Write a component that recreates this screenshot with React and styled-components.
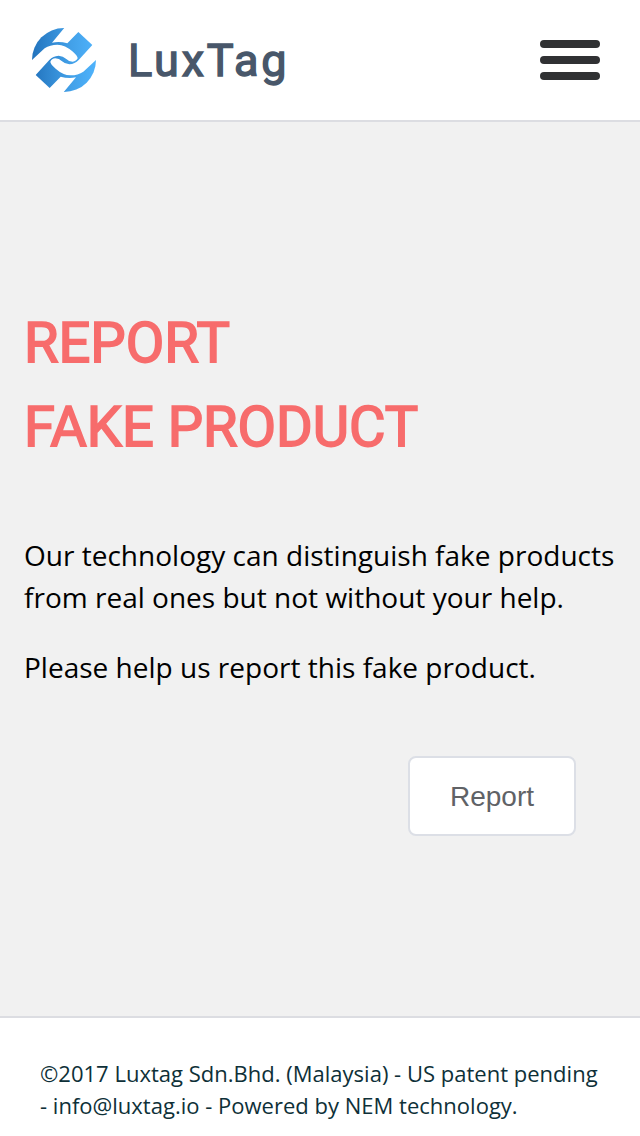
import React from 'react';
import styled, { createGlobalStyle } from 'styled-components';

const GlobalStyle = createGlobalStyle`
  * {
    box-sizing: border-box;
  }
  body {
    margin: 0;
    background: #fff;
    font-family: 'Open Sans', sans-serif;
  }
`;

const Page = styled.div`
  display: flex;
  flex-direction: column;
  height: 1136px;
  overflow: hidden;
`;

const Header = styled.header`
  display: flex;
  align-items: center;
  justify-content: space-between;
  height: 122px;
  padding: 0 40px 0 32px;
  border-bottom: 2px solid #dcdde2;
  flex: none;
`;

const Brand = styled.div`
  display: flex;
  align-items: center;
  gap: 32px;
`;

const LogoSvg = styled.svg`
  display: block;
  width: 64px;
  height: 64px;
`;

const BrandName = styled.span`
  padding-top: 2px;
  color: #48576a;
  font-family: Roboto, sans-serif;
  font-size: 45px;
  line-height: 60px;
  letter-spacing: 2.8px;
  -webkit-text-stroke: 1.4px #48576a;
`;

const MenuButton = styled.button`
  display: flex;
  flex-direction: column;
  gap: 8px;
  width: 60px;
  padding: 0;
  border: none;
  background: none;
`;

const MenuBar = styled.span`
  height: 8px;
  border-radius: 4px;
  background: #303133;
`;

const Main = styled.main`
  flex: 1;
  display: flex;
  flex-direction: column;
  padding: 179px 24px 0;
  background: #f1f1f1;
`;

const Title = styled.h1`
  margin: 0 0 65px;
  color: #f76c6c;
  font-family: Roboto, sans-serif;
  font-size: 56px;
  font-weight: 400;
  line-height: 84px;
  -webkit-text-stroke: 1.75px #f76c6c;
`;

const Text = styled.p`
  margin: 0 0 28px;
  color: #000;
  font-size: 28px;
  line-height: 42px;
  letter-spacing: 0.01px;
  white-space: nowrap;
`;

const ReportButton = styled.button`
  align-self: flex-end;
  width: 168px;
  height: 80px;
  margin: 40px 40px 0 0;
  padding: 2px 6px 0;
  border: 2px solid #dcdfe6;
  border-radius: 8px;
  background: #fff;
  color: #606266;
  font-family: 'Liberation Sans', Arial, sans-serif;
  font-size: 28px;
`;

const Footer = styled.footer`
  flex: none;
  height: 120px;
  padding: 39px 40px 0;
  border-top: 2px solid #dcdde2;
  color: #0e3038;
  font-size: 22px;
  line-height: 32px;
  letter-spacing: 0.01px;
  white-space: nowrap;
`;

const Logo = () => (
  <LogoSvg viewBox="12 12 192 192">
    <defs>
      <linearGradient
        id="logo"
        gradientUnits="userSpaceOnUse"
        x1="12"
        y1="108"
        x2="204"
        y2="108"
      >
        <stop offset="0" stopColor="#2273bd" />
        <stop offset="0.6" stopColor="#42a0e8" />
        <stop offset="1" stopColor="#4fb3fc" />
      </linearGradient>
    </defs>
    <path
      fill="url(#logo)"
      d="M108 12A96 96 0 0 0 12 108L23 153L65 192L108 204A96 96 0 0 0 204 108L193 63L151 24Z"
    />
    {/* the two interlocking hands and the gaps above and below them */}
    <g fill="#fff">
      <path d="M0 119L12 108L50 73Q66 62 88 62Q112 63 133 82Q149 96 149 103Q145 112 134 113Q122 113 115 105Q105 96 92 95Q75 96 64 108L23 153L0 175Z" />
      <path d="M216 97L204 108L166 143Q150 154 128 154Q104 153 83 134Q67 120 67 113Q71 104 82 103Q94 103 101 111Q111 120 124 121Q141 120 152 108L193 63L216 41Z" />
      <path d="M112 8L72 56Q95 51 118 58L151 24L155 8Z" />
      <path d="M104 208L144 160Q121 165 98 158L65 192L61 208Z" />
    </g>
  </LogoSvg>
);

const App = () => (
  <>
    <GlobalStyle />
    <Page>
      <Header>
        <Brand>
          <Logo />
          <BrandName>LuxTag</BrandName>
        </Brand>
        <MenuButton aria-label="Menu">
          <MenuBar />
          <MenuBar />
          <MenuBar />
        </MenuButton>
      </Header>
      <Main>
        <Title>
          REPORT
          <br />
          FAKE PRODUCT
        </Title>
        <Text>
          Our technology can distinguish fake products
          <br />
          from real ones but not without your help.
        </Text>
        <Text>Please help us report this fake product.</Text>
        <ReportButton>Report</ReportButton>
      </Main>
      <Footer>
        ©2017 Luxtag Sdn.Bhd. (Malaysia) - US patent pending
        <br />- info@luxtag.io - Powered by NEM technology.
      </Footer>
    </Page>
  </>
);

export default App;
